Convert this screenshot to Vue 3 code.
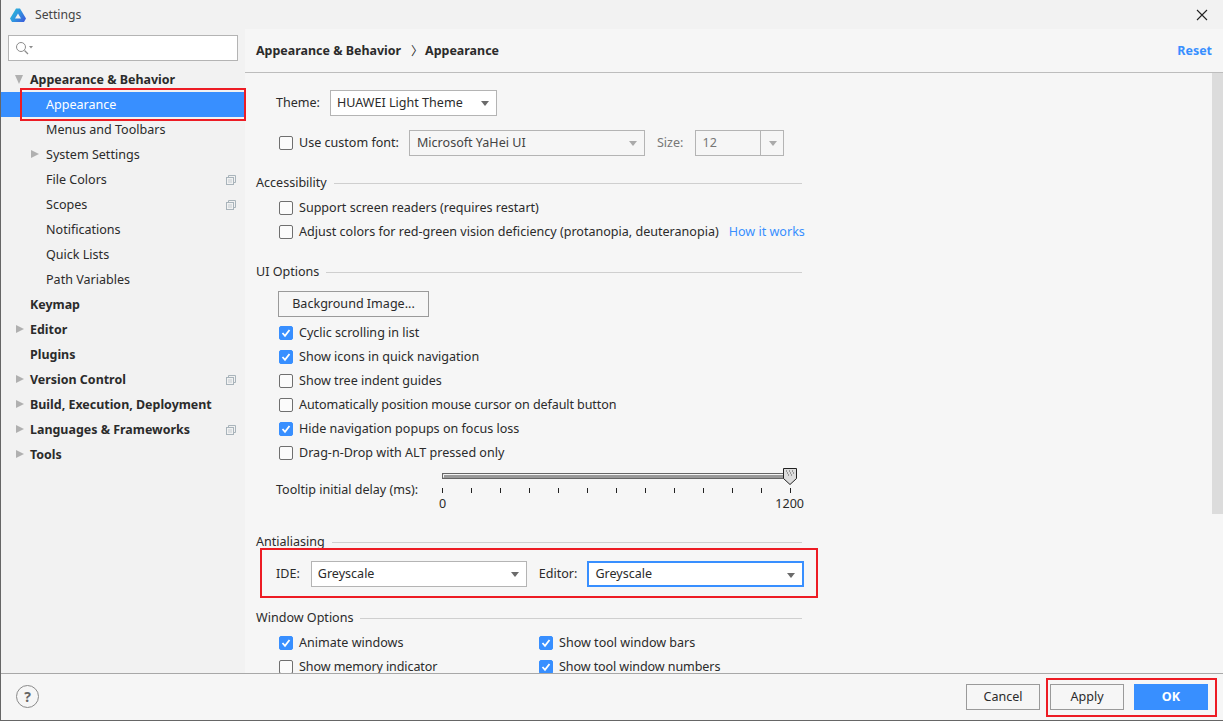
<script setup>
const tree = [
  { label: 'Appearance & Behavior', level: 0, bold: true, arrow: 'down' },
  { label: 'Appearance', level: 1, selected: true },
  { label: 'Menus and Toolbars', level: 1 },
  { label: 'System Settings', level: 1, arrow: 'right' },
  { label: 'File Colors', level: 1, copy: true },
  { label: 'Scopes', level: 1, copy: true },
  { label: 'Notifications', level: 1 },
  { label: 'Quick Lists', level: 1 },
  { label: 'Path Variables', level: 1 },
  { label: 'Keymap', level: 0, bold: true },
  { label: 'Editor', level: 0, bold: true, arrow: 'right' },
  { label: 'Plugins', level: 0, bold: true },
  { label: 'Version Control', level: 0, bold: true, arrow: 'right', copy: true },
  { label: 'Build, Execution, Deployment', level: 0, bold: true, arrow: 'right' },
  { label: 'Languages & Frameworks', level: 0, bold: true, arrow: 'right', copy: true },
  { label: 'Tools', level: 0, bold: true, arrow: 'right' }
]
const uiOptions = [
  { label: 'Cyclic scrolling in list', checked: true },
  { label: 'Show icons in quick navigation', checked: true },
  { label: 'Show tree indent guides', checked: false },
  { label: 'Automatically position mouse cursor on default button', checked: false, tight: true },
  { label: 'Hide navigation popups on focus loss', checked: true },
  { label: 'Drag-n-Drop with ALT pressed only', checked: false }
]
const ticks = Array.from({ length: 13 }, (_, i) => i * 29)
</script>

<template>
  <div class="window">
    <header class="titlebar">
      <svg class="logo" width="16" height="14" viewBox="0 0 16 14">
        <defs>
          <linearGradient id="lg" x1="0" y1="0" x2="1" y2="0.6">
            <stop offset="0" stop-color="#2cc4cf" />
            <stop offset="0.5" stop-color="#2f9be0" />
            <stop offset="1" stop-color="#3a66dc" />
          </linearGradient>
        </defs>
        <path fill-rule="evenodd" d="M6 0.5 H10 L16 10.5 L14 14 H2 L0 10.5 Z M8 5.5 L5 10.5 H11 Z" fill="url(#lg)" />
      </svg>
      <span class="title">Settings</span>
      <svg class="close" width="12" height="12" viewBox="0 0 12 12">
        <path d="M1 1 L11 11 M11 1 L1 11" stroke="#222" stroke-width="1.1" fill="none" />
      </svg>
    </header>

    <div class="body">
      <aside class="sidebar">
        <div class="search">
          <svg width="20" height="14" viewBox="0 0 20 14">
            <circle cx="6" cy="6" r="4.5" fill="none" stroke="#8c8c8c" stroke-width="1" />
            <path d="M9.5 9.5 L13 13" stroke="#8c8c8c" stroke-width="1.2" />
            <path d="M14 5 L18 5 L16 7.5 Z" fill="#8c8c8c" />
          </svg>
        </div>
        <ul class="tree">
          <li
            v-for="item in tree"
            :key="item.label"
            class="row"
            :class="{ selected: item.selected, bold: item.bold, child: item.level === 1 }"
          >
            <span v-if="item.arrow === 'down'" class="arrow-down"></span>
            <span v-else-if="item.arrow === 'right'" class="arrow-right"></span>
            <span class="row-label">{{ item.label }}</span>
            <svg v-if="item.copy" class="copy" width="10" height="10" viewBox="0 0 10 10">
              <path d="M2.5 2.5 V0.5 H9.5 V7.5 H7.5" fill="none" stroke="#a9b4bb" />
              <rect x="0.5" y="2.5" width="7" height="7" fill="none" stroke="#a9b4bb" />
              <path d="M2 5 H6 M2 7 H6" stroke="#c4ccd1" />
            </svg>
          </li>
        </ul>
        <div class="mark mark-nav"></div>
      </aside>

      <main class="main">
        <div class="crumbs">
          <span>Appearance &amp; Behavior</span>
          <span class="crumb-sep">〉</span>
          <span>Appearance</span>
          <a class="reset">Reset</a>
        </div>

        <div class="scroller">
          <div class="content">
            <div class="line theme-line">
              <label class="field-label theme-label">Theme:</label>
              <div class="select theme-select"><span>HUAWEI Light Theme</span><i class="caret"></i></div>
            </div>

            <div class="line font-line">
              <span class="check"></span>
              <span class="check-label font-label">Use custom font:</span>
              <div class="select disabled font-select"><span>Microsoft YaHei UI</span><i class="caret"></i></div>
              <span class="size-label">Size:</span>
              <div class="select disabled size-select"><span>12</span><b class="size-btn"><i class="caret"></i></b></div>
            </div>

            <div class="section sec-access"><span>Accessibility</span><i></i></div>
            <div class="check-line first"><span class="check"></span><span class="check-label">Support screen readers (requires restart)</span></div>
            <div class="check-line">
              <span class="check"></span>
              <span class="check-label">Adjust colors for red-green vision deficiency (protanopia, deuteranopia)</span>
              <a class="link">How it works</a>
            </div>

            <div class="section sec-ui"><span>UI Options</span><i></i></div>
            <button class="bg-btn">Background Image...</button>
            <div v-for="opt in uiOptions" :key="opt.label" class="check-line">
              <span class="check" :class="{ on: opt.checked }">
                <svg v-if="opt.checked" width="10" height="10" viewBox="0 0 10 10">
                  <path d="M1.5 5 L4 7.8 L8.5 2" fill="none" stroke="#fff" stroke-width="1.8" />
                </svg>
              </span>
              <span class="check-label" :class="{ tight: opt.tight }">{{ opt.label }}</span>
            </div>

            <div class="slider-block">
              <span class="field-label slider-label">Tooltip initial delay (ms):</span>
              <div class="slider">
                <svg class="slider-art" width="364" height="30" viewBox="0 0 364 30">
                  <rect x="0.5" y="6.5" width="348" height="5" fill="#9a9a9a" stroke="#666" />
                  <path d="M1.5 7.5 H341 M1.5 10.5 V7.5" fill="none" stroke="#f4f4f4" />
                  <path d="M341.5 1.5 H354.5 V11.5 L348 17.5 L341.5 11.5 Z" fill="#dcdcdc" stroke="#222" />
                  <path d="M344 4 h1 M347 4 h1 M350 4 h1 M345 6 h1 M348 6 h1 M351 6 h1 M346 8 h1 M349 8 h1" stroke="#555" />
                  <path v-for="t in ticks" :key="t" :d="`M${t + 0.5} 21 V26`" stroke="#222" />
                </svg>
                <div class="slider-values"><span>0</span><span>1200</span></div>
              </div>
            </div>

            <div class="section sec-anti"><span>Antialiasing</span><i></i></div>
            <div class="line anti-line">
              <label class="field-label">IDE:</label>
              <div class="select ide-select"><span>Greyscale</span><i class="caret"></i></div>
              <label class="field-label editor-label">Editor:</label>
              <div class="select focused editor-select"><span>Greyscale</span><i class="caret"></i></div>
            </div>

            <div class="section sec-window"><span>Window Options</span><i></i></div>
            <div class="two-col">
              <div class="check-line first"><span class="check on"><svg width="10" height="10" viewBox="0 0 10 10"><path d="M1.5 5 L4 7.8 L8.5 2" fill="none" stroke="#fff" stroke-width="1.8" /></svg></span><span class="check-label">Animate windows</span></div>
              <div class="check-line first"><span class="check on"><svg width="10" height="10" viewBox="0 0 10 10"><path d="M1.5 5 L4 7.8 L8.5 2" fill="none" stroke="#fff" stroke-width="1.8" /></svg></span><span class="check-label">Show tool window bars</span></div>
              <div class="check-line last"><span class="check"></span><span class="check-label tight">Show memory indicator</span></div>
              <div class="check-line last"><span class="check on"><svg width="10" height="10" viewBox="0 0 10 10"><path d="M1.5 5 L4 7.8 L8.5 2" fill="none" stroke="#fff" stroke-width="1.8" /></svg></span><span class="check-label tight">Show tool window numbers</span></div>
            </div>
            <div class="mark mark-anti"></div>
          </div>
          <div class="scrollbar"><div class="thumb"></div></div>
        </div>
      </main>
    </div>

    <footer class="footer">
      <span class="help">?</span>
      <div class="actions">
        <button class="btn">Cancel</button>
        <button class="btn apply">Apply</button>
        <button class="btn primary">OK</button>
      </div>
      <div class="mark mark-actions"></div>
    </footer>
  </div>
</template>

<style>
html, body { margin: 0; padding: 0; background: #f6f6f6; }
</style>

<style scoped>
* { box-sizing: border-box; }
.window {
  width: 1223px; height: 721px; display: flex; flex-direction: column; overflow: hidden;
  border-left: 1px solid #666; border-bottom: 1px solid #666;
  background: #f6f6f6; color: #2b2b2b;
  font-family: "Noto Sans", "Open Sans", sans-serif; font-size: 12.55px; line-height: 16px;
}
.titlebar { height: 29px; flex: none; display: flex; align-items: center; background: #f2f2f2; padding: 0 16px 0 9px; }
.logo { margin-right: 9px; }
.title { color: #444; font-size: 12.2px; }
.close { margin-left: auto; margin-right: -1px; }
.body { flex: 1; min-height: 0; display: flex; }
.sidebar { width: 244px; flex: none; background: #f2f2f2; position: relative; padding-top: 6px; }
.search { margin-left: 7px; width: 230px; height: 26px; background: #fff; border: 1px solid #b4b4b4; display: flex; align-items: center; padding-left: 6px; }
.tree { list-style: none; margin: 6px 0 0; padding: 0; }
.row { height: 25px; display: flex; align-items: center; padding-left: 29px; position: relative; }
.row.child { padding-left: 45px; }
.row.bold { font-weight: 700; font-size: 12.45px; }
.row.selected { background: #388fff; color: #fff; }
.arrow-down { position: absolute; left: 14px; top: 8px; border-left: 4.5px solid transparent; border-right: 4.5px solid transparent; border-top: 9px solid #b0b0b0; }
.arrow-right { position: absolute; left: 15px; top: 8px; border-top: 4.5px solid transparent; border-bottom: 4.5px solid transparent; border-left: 8px solid #b0b0b0; }
.row.child .arrow-right { left: 30px; }
.copy { position: absolute; left: 225px; top: 8px; }
.main { flex: 1; min-width: 0; display: flex; flex-direction: column; }
.crumbs { height: 44px; flex: none; display: flex; align-items: center; padding: 0 11px 0 11px; font-weight: 700; font-size: 12.45px; border-bottom: 1px solid #bdbdbd; }
.crumb-sep { font-weight: 400; margin: 0 2px 0 10px; font-family: "Noto Sans CJK SC", sans-serif; font-size: 12px; }
.reset { margin-left: auto; color: #388fff; }
.scroller { flex: 1; min-height: 0; display: flex; overflow: hidden; }
.content { flex: 1; min-width: 0; padding: 17px 0 0 11px; position: relative; overflow: hidden; }
.scrollbar { width: 11px; flex: none; background: #f6f6f6; }
.thumb { height: 441px; background: #dcdcdc; }
.line { display: flex; align-items: center; }
.field-label { white-space: nowrap; }
.select { height: 26px; background: #fff; border: 1px solid #b4b4b4; display: flex; align-items: center; padding-left: 6px; position: relative; white-space: nowrap; }
.caret { position: absolute; right: 7px; top: 10px; border-left: 4.5px solid transparent; border-right: 4.5px solid transparent; border-top: 5px solid #6b6b6b; }
.theme-line { padding-left: 20px; }
.theme-label { width: 54px; flex: none; }
.theme-select { width: 167px; }
.font-line { margin-top: 14px; padding-left: 23px; }
.font-label { margin-left: 6px; }
.disabled { background: #f6f6f6; color: #444; }
.disabled .caret { border-top-color: #aaa; }
.font-select { margin-left: 10px; width: 236px; padding-left: 7px; }
.size-label { margin-left: 12px; color: #777; }
.size-select { margin-left: 12px; width: 89px; color: #777; }
.size-btn { position: absolute; right: 0; top: 0; bottom: 0; width: 23px; border-left: 1px solid #b4b4b4; }
.size-btn .caret { right: 6px; }
.section { display: flex; align-items: center; width: 546px; height: 16px; }
.section i { flex: 1; height: 1px; background: #cfcfcf; margin-left: 7px; }
.sec-access { margin-top: 19px; margin-bottom: 1px; }
.sec-ui { margin-top: 20px; }
.sec-anti { margin-top: 18px; }
.sec-window { margin-top: 23px; }
.check-line { height: 24px; display: flex; align-items: center; padding-left: 23px; white-space: nowrap; }
.check-line.first { margin-top: 5px; }
.check-line.last { line-height: 14px; }
.check { width: 14px; height: 14px; flex: none; border: 1px solid #6f6f6f; border-radius: 2px; background: #fbfbfb; display: inline-flex; align-items: center; justify-content: center; }
.check.on { background: #388fff; border-color: #388fff; }
.check-label { margin-left: 6px; }
.tight { letter-spacing: -0.095px; }
.link { color: #388fff; margin-left: 10px; }
.bg-btn { display: block; margin: 11px 0 4px 22px; width: 151px; height: 26px; background: #f6f6f6; border: 1px solid #9a9a9a; font: inherit; color: inherit; padding: 0; }
.slider-block { display: flex; padding-left: 20px; height: 51px; position: relative; }
.slider-label { margin-top: 17px; }
.slider { position: absolute; left: 186px; top: 2px; width: 364px; }
.slider-art { display: block; }
.slider-values { display: flex; justify-content: space-between; width: 365px; margin: -1px 0 0 -3px; }
.anti-line { margin-top: 11px; padding-left: 20px; }
.ide-select { margin-left: 11px; width: 216px; }
.editor-label { margin-left: 12px; }
.editor-select { margin-left: 10px; width: 217px; }
.focused { border: 2px solid #388fff; }
.two-col { display: grid; grid-template-columns: 260px 1fr; }
.help { position: absolute; left: 15px; top: 11px; width: 23px; height: 23px; border: 1px solid #8a8a8a; border-radius: 50%; display: flex; align-items: center; justify-content: center; font-weight: 700; font-size: 14px; color: #666; }
.footer { height: 47px; flex: none; position: relative; border-top: 1px solid #a8a8a8; display: flex; align-items: center; justify-content: flex-end; padding-right: 15px; }
.actions { display: flex; gap: 10px; }
.btn { width: 74px; height: 26px; border: 1px solid #9a9a9a; background: #f6f6f6; font: inherit; color: inherit; padding: 0; }
.btn.primary { background: #388fff; border-color: #388fff; color: #fff; font-weight: 700; }
.mark { position: absolute; border: 2px solid #ed1c24; pointer-events: none; }
.mark-nav { left: 19px; top: 59px; width: 226px; height: 33px; z-index: 2; }
.mark-anti { left: 15px; top: 475px; width: 558px; height: 50px; }
.mark-actions { left: 1045px; top: 4px; width: 171px; height: 39px; }
</style>
